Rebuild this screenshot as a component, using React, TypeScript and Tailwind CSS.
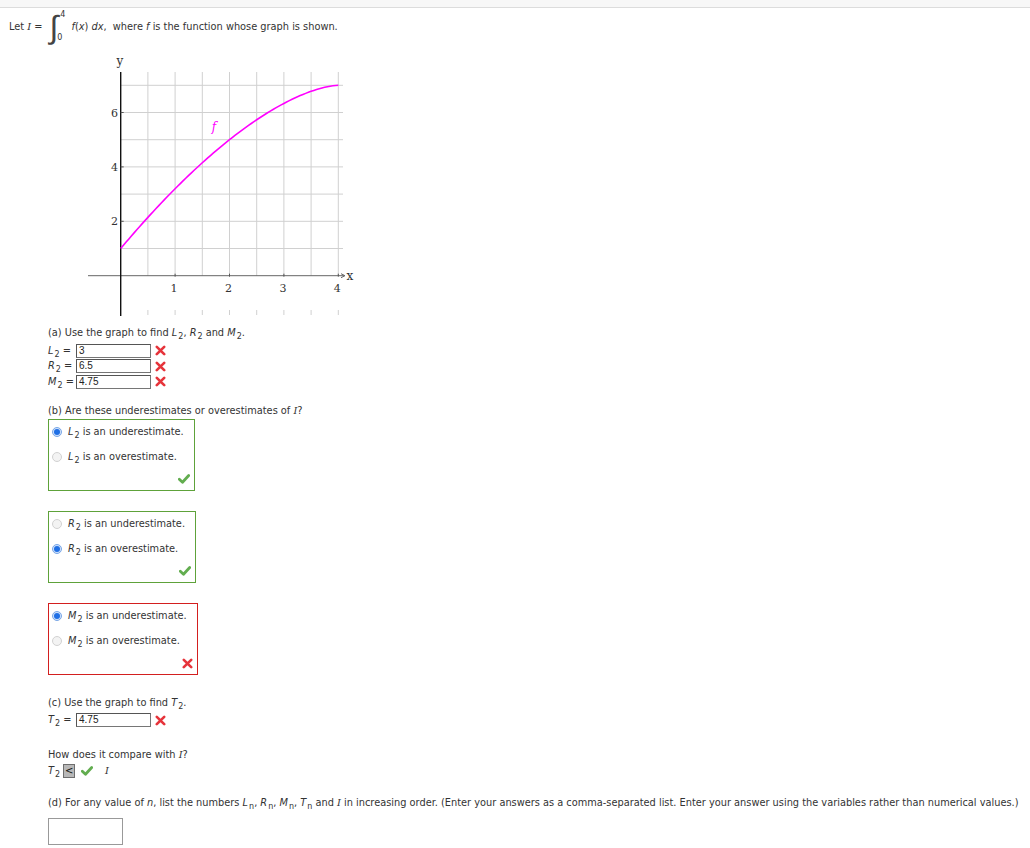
import React from "react";

// graph coordinates (page pixels)
const X0 = 120.7;
const Y0 = 275.7;
const UX = 54.4;
const UY = 27.2;
const px = (x: number) => X0 + UX * x;
const py = (y: number) => Y0 - UY * y;

// f(x) = 7 - 6 (1 - x/4)^k, read off the picture
const f = (x: number) => 7 - 6 * Math.pow(1 - x / 4, 1.585);

function curvePath() {
  const n = 80;
  let d = "";
  for (let i = 0; i <= n; i++) {
    const x = (4 * i) / n;
    d += `${i ? " L" : "M"}${px(x).toFixed(2)},${py(f(x)).toFixed(2)}`;
  }
  return d;
}

function Graph() {
  const vx = [1, 2, 3, 4, 5, 6, 7, 8].map((k) => X0 + k * (UX / 2));
  const hy = [1, 2, 3, 4, 5, 6, 7].map((j) => py(j));
  return (
    <svg width="290" height="270" className="block ml-[80px] mt-[7px]">
      <g transform="translate(-80,-52)" fontFamily="'DejaVu Serif', serif" fontSize="11" fill="#333">
        {vx.map((x) => (
          <g key={x}>
            <line x1={x} y1={72} x2={x} y2={Y0} stroke="#d0d0d0" strokeWidth="1" />
            <line x1={x} y1={310} x2={x} y2={315} stroke="#d0d0d0" strokeWidth="1" />
          </g>
        ))}
        {hy.map((y) => (
          <line key={y} x1={X0} y1={y} x2={343} y2={y} stroke="#d0d0d0" strokeWidth="1" />
        ))}
        {/* axes */}
        <line x1={88} y1={Y0} x2={344} y2={Y0} stroke="#666" strokeWidth="1" />
        <path d={`M341,${Y0 - 2} L345,${Y0} L341,${Y0 + 2}`} fill="none" stroke="#666" strokeWidth="1" />
        <line x1={X0} y1={72} x2={X0} y2={316} stroke="#111" strokeWidth="1.4" />
        {[1, 2, 3, 4].map((k) => (
          <line key={k} x1={px(k)} y1={Y0 - 2} x2={px(k)} y2={Y0 + 1} stroke="#555" strokeWidth="1" />
        ))}
        {[2, 4, 6].map((k) => (
          <line key={k} x1={X0} y1={py(k)} x2={X0 + 3} y2={py(k)} stroke="#555" strokeWidth="1" />
        ))}
        {/* labels */}
        <text x={120} y={65} textAnchor="middle" fontSize="12">y</text>
        <text x={350} y={280} textAnchor="middle" fontSize="12">x</text>
        {[2, 4, 6].map((k) => (
          <text key={k} x={118} y={py(k) + 4} textAnchor="end">{k}</text>
        ))}
        {[1, 2, 3, 4].map((k) => (
          <text key={k} x={px(k) - 1} y={292} textAnchor="middle">{k}</text>
        ))}
        <path d={curvePath()} fill="none" stroke="#ff00ff" strokeWidth="1.6" />
        <text x={214} y={131} textAnchor="middle" fill="#ff00ff" fontStyle="italic" fontSize="12">f</text>
      </g>
    </svg>
  );
}

function V({ v, s, serif }: { v: string; s?: string; serif?: boolean }) {
  return (
    <span className="whitespace-nowrap">
      <span className={serif ? "italic font-['DejaVu_Serif',serif]" : "italic"}>{v}</span>
      {s && <sub className="text-[8px] not-italic ml-[1px] bottom-[-3px]">{s}</sub>}
    </span>
  );
}

function RedX() {
  return (
    <svg width="11" height="11" viewBox="0 0 11 11" className="inline-block">
      <path d="M1.8,1.8 L9.2,9.2 M9.2,1.8 L1.8,9.2" stroke="#e6343b" strokeWidth="2.6" strokeLinecap="round" />
    </svg>
  );
}

function Check() {
  return (
    <svg width="12" height="10" viewBox="0 0 12 10" className="inline-block">
      <path d="M1.3,5.2 L4.5,8.3 L10.7,1.5" fill="none" stroke="#62ad4f" strokeWidth="2.8" strokeLinecap="round" strokeLinejoin="round" />
    </svg>
  );
}

function Field({ value }: { value: string }) {
  return (
    <span className="inline-flex items-center w-[75px] h-[14px] border border-[#767676] border-t-[#555] border-l-[#555] bg-white pl-[2px] text-[10px] leading-none font-['Liberation_Sans',Arial,sans-serif] text-[#222]">
      {value}
    </span>
  );
}

function Radio({ on }: { on?: boolean }) {
  return on ? (
    <span className="inline-flex items-center justify-center w-[10px] h-[10px] rounded-full border border-[#7aa7e6] bg-[#cfe1fb]">
      <span className="w-[6px] h-[6px] rounded-full bg-[#1f6fe5]" />
    </span>
  ) : (
    <span className="inline-block w-[10px] h-[10px] rounded-full border border-[#d2d2d2] bg-[#f3f3f3]" />
  );
}

function ChoiceBox({
  v,
  sel,
  ok,
  className,
}: {
  v: string;
  sel: 0 | 1;
  ok: boolean;
  className?: string;
}) {
  return (
    <div
      className={`w-fit h-[72px] flex flex-col border pl-[3px] pr-[4px] pt-[5px] ${
        ok ? "border-[#5ea23a]" : "border-[#d31f1f]"
      } ${className || ""}`}
    >
      {["underestimate", "overestimate"].map((w, i) => (
        <div key={w} className={`flex items-center gap-[6px] h-[14px] pr-[6px] ${i ? "mt-[11px]" : ""}`}>
          <Radio on={sel === i} />
          <span>
            <V v={v} s="2" /> is an {w}.
          </span>
        </div>
      ))}
      <div className="flex justify-end mt-[10px]">{ok ? <Check /> : <RedX />}</div>
    </div>
  );
}

function AnswerRow({ v, value }: { v: string; value: string }) {
  return (
    <div className="flex items-center h-[15.5px]">
      <span className="w-[28px] shrink-0 whitespace-nowrap">
        <V v={v} s="2" /> =
      </span>
      <Field value={value} />
      <span className="ml-[4px] flex">
        <RedX />
      </span>
    </div>
  );
}

export default function App() {
  return (
    <div className="min-h-[848px] bg-white text-[9.8px] leading-[14px] text-[#333] font-['DejaVu_Sans',Verdana,sans-serif]">
      <div className="h-[8px] bg-[#f7f7f7] border-b border-[#dcdcdc]" />

      <div className="flex items-center h-[37px] pl-[9px] whitespace-nowrap">
        <span>Let&nbsp;</span>
        <V v="I" serif />
        <span>&nbsp;=&nbsp;</span>
        <span className="inline-flex items-stretch h-[30px] ml-[4px]">
          <span className="font-['DejaVu_Sans',sans-serif] text-[32px] leading-[30px] font-extralight text-[#444]">∫</span>
          <span className="flex flex-col justify-between text-[8px] leading-[9px] ml-[-1px] mr-[6px]">
            <span className="ml-[3px] mt-[-2px]">4</span>
            <span>0</span>
          </span>
        </span>
        <span className="italic">f</span>
        <span>(</span>
        <span className="italic">x</span>
        <span>)&nbsp;</span>
        <span className="italic">dx</span>
        <span>,&nbsp; where&nbsp;</span>
        <span className="italic">f</span>
        <span>&nbsp;is the function whose graph is shown.</span>
      </div>

      <Graph />

      <div className="pl-[48px]">
        <div className="mt-[4px]">
          (a) Use the graph to find <V v="L" s="2" />, <V v="R" s="2" /> and <V v="M" s="2" />.
        </div>
        <div className="mt-[3px]">
          <AnswerRow v="L" value="3" />
          <AnswerRow v="R" value="6.5" />
          <AnswerRow v="M" value="4.75" />
        </div>

        <div className="mt-[14px]">
          (b) Are these underestimates or overestimates of <V v="I" serif />?
        </div>
        <ChoiceBox v="L" sel={0} ok className="mt-[1px]" />
        <ChoiceBox v="R" sel={1} ok className="mt-[20px]" />
        <ChoiceBox v="M" sel={0} ok={false} className="mt-[20px]" />

        <div className="mt-[21px]">
          (c) Use the graph to find <V v="T" s="2" />.
        </div>
        <div className="mt-[3px]">
          <AnswerRow v="T" value="4.75" />
        </div>

        <div className="mt-[20px]">
          How does it compare with <V v="I" serif />?
        </div>
        <div className="flex items-center h-[16px] mt-[1px]">
          <V v="T" s="2" />
          <span className="ml-[3px] inline-flex items-center justify-center w-[12px] h-[14px] bg-[#b8b8b8] border border-[#6e6e6e] text-[10px] leading-none text-[#111]">
            &lt;
          </span>
          <span className="ml-[6px] flex">
            <Check />
          </span>
          <span className="ml-[12px]">
            <V v="I" serif />
          </span>
        </div>

        <div className="mt-[17px] whitespace-nowrap">
          (d) For any value of <span className="italic">n</span>, list the numbers <V v="L" s="n" />, <V v="R" s="n" />,{" "}
          <V v="M" s="n" />, <V v="T" s="n" /> and <V v="I" serif /> in increasing order. (Enter your answers as a
          comma-separated list. Enter your answer using the variables rather than numerical values.)
        </div>
        <div className="mt-[8px] w-[75px] h-[27px] border border-[#999]" />
      </div>
    </div>
  );
}
